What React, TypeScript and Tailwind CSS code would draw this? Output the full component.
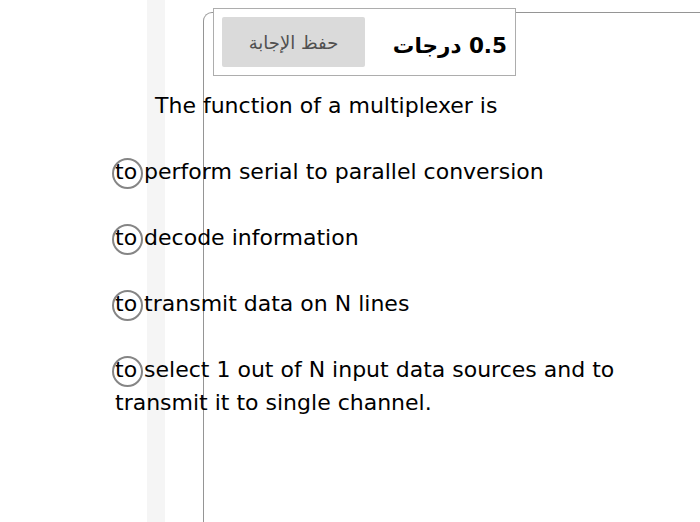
export default function App() {
  const options = [
    'to perform serial to parallel conversion',
    'to decode information',
    'to transmit data on N lines',
    'to select 1 out of N input data sources and to transmit it to single channel.',
  ];

  return (
    <div className="relative w-[700px] h-[522px] overflow-hidden bg-white font-['DejaVu_Sans',sans-serif] text-black">
      {/* faint strip behind the page */}
      <div className="absolute left-[147px] top-0 h-full w-[18px] bg-[#f5f5f5]" />

      <div className="relative ml-[203px] mt-3 h-[520px] rounded-tl-[9px] border-l-[1.5px] border-t-[1.5px] border-[#959595]">
        <div
          dir="rtl"
          className="-mt-[5px] ml-[9px] flex h-[68px] w-[303px] items-center justify-between border border-[#adadad] bg-white pl-2 pr-[8px]"
        >
          <h3 className="mt-[7px] text-[21.5px] font-bold leading-none">0.5 درجات</h3>
          <button
            type="button"
            className="h-[50px] w-[143px] rounded-[2px] bg-[#dadada] text-[18px] text-[#505050]"
          >
            حفظ الإجابة
          </button>
        </div>

        <p className="mt-[13px] -ml-[49px] text-[22px] leading-[33px]">
          The function of a multiplexer is
        </p>

        <div className="mt-[33px] -ml-[89px] flex w-[525px] flex-col gap-[33px]">
          {options.map((o) => (
            <label key={o} className="relative block text-[22px] leading-[33px]">
              <span className="absolute -left-[3px] top-[3px] h-[31px] w-[31px] rounded-full border-2 border-[#858585]" />
              {o}
            </label>
          ))}
        </div>
      </div>
    </div>
  );
}
